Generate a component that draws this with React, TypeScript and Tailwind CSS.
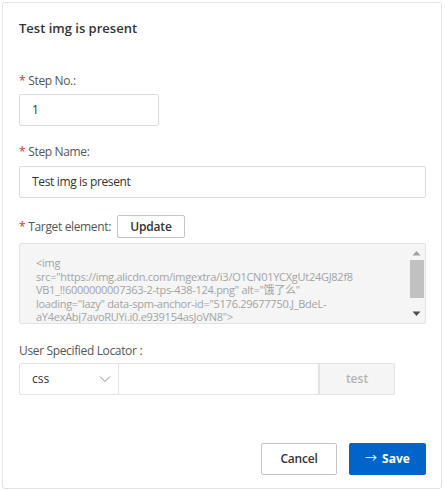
import React from "react";

export default function App() {
  const font = { fontFamily: '"Open Sans", "Noto Sans CJK SC", sans-serif' };
  const label = "text-[12px] leading-[18px] tracking-[-0.35px] text-[#555]";
  return (
    <div className="w-[445px] h-[491px] bg-white p-[2px]" style={font}>
      <div className="w-[440px] h-[487px] border border-[#e3e3e3] rounded-[3px] bg-white flex flex-col pl-[16px] pr-[15px] text-[#333]">
        <div className="pt-[15px] h-[50px] text-[13px] font-semibold text-[#333] leading-[20px]">Test img is present</div>
        <div className={"mt-[19px] " + label}><span className="text-[#d93026] mr-[3px]">*</span>Step No.:</div>
        <div className="mt-[4px] w-[140px] h-[32px] border border-[#dcdcdc] rounded-[2px] flex items-center px-[12px] text-[12px] text-[#333]">1</div>
        <div className={"mt-[17px] " + label}><span className="text-[#d93026] mr-[3px]">*</span>Step Name:</div>
        <div className="mt-[5px] w-full h-[32px] border border-[#dcdcdc] rounded-[2px] flex items-center px-[12px] text-[12px] tracking-[-0.35px] text-[#333]">Test img is present</div>
        <div className="mt-[17px] flex items-center h-[23px]">
          <div className={label}><span className="text-[#d93026] mr-[3px]">*</span>Target element:</div>
          <div className="ml-[6px] w-[68px] h-[23px] border border-[#c4c4c4] rounded-[2px] flex items-center justify-center text-[12px] font-semibold tracking-[-0.2px] text-[#333]">Update</div>
        </div>
        <div className="mt-[5px] w-full h-[81px] border border-[#e3e3e3] rounded-[2px] bg-[#f5f5f5] flex overflow-hidden">
          <div className="flex-1 pl-[16px] pt-[12px] text-[11px] leading-[13.5px] tracking-[-0.27px] text-[#a3a3a3] whitespace-pre">
            {'<img\nsrc="https://img.alicdn.com/imgextra/i3/O1CN01YCXgUt24GJ82f8\nVB1_!!6000000007363-2-tps-438-124.png" alt="饿了么"\nloading="lazy" data-spm-anchor-id="5176.29677750.J_BdeL-\naY4exAbj7avoRUYi.i0.e939154asJoVN8">'}
          </div>
          <div className="w-[17px] flex flex-col items-center pt-[6px] pb-[6px]">
            <svg width="9" height="6" viewBox="0 0 9 6"><path d="M0.5 5.5 L4.5 1 L8.5 5.5 Z" fill="#a0a0a0" /></svg>
            <div className="mt-[4px] w-[14px] h-[38px] bg-[#c1c1c1]" />
            <div className="flex-1" />
            <svg width="9" height="6" viewBox="0 0 9 6"><path d="M0.5 0.5 L4.5 5 L8.5 0.5 Z" fill="#505050" /></svg>
          </div>
        </div>
        <div className={"mt-[18px] " + label}>User Specified Locator<span className="ml-[3px]">:</span></div>
        <div className="mt-[3px] flex h-[32px]">
          <div className="w-[100px] h-[32px] border border-[#e3e3e3] rounded-l-[2px] flex items-center justify-between pl-[12px] pr-[7px] text-[12px] text-[#333]">
            <span>css</span>
            <svg width="12" height="12" viewBox="0 0 12 12"><path d="M1 3.5 L6 8.5 L11 3.5" fill="none" stroke="#8a8a8a" strokeWidth="1" /></svg>
          </div>
          <div className="w-[200px] h-[32px] border border-l-0 border-[#e3e3e3]" />
          <div className="w-[76px] h-[32px] border border-[#e3e3e3] bg-[#f5f5f5] rounded-r-[2px] flex items-center justify-center text-[12px] font-semibold text-[#b3b3b3]">test</div>
        </div>
        <div className="flex-1" />
        <div className="flex justify-end gap-[12px] pb-[13px]">
          <div className="w-[76px] h-[32px] border border-[#c4c4c4] rounded-[2px] flex items-center justify-center text-[12px] font-semibold tracking-[-0.2px] text-[#333]">Cancel</div>
          <div className="w-[77px] h-[32px] bg-[#0064c8] rounded-[2px] flex items-center justify-center text-[12px] font-bold text-white gap-[5px]">
            <span className="font-normal">→</span>Save
          </div>
        </div>
      </div>
    </div>
  );
}
